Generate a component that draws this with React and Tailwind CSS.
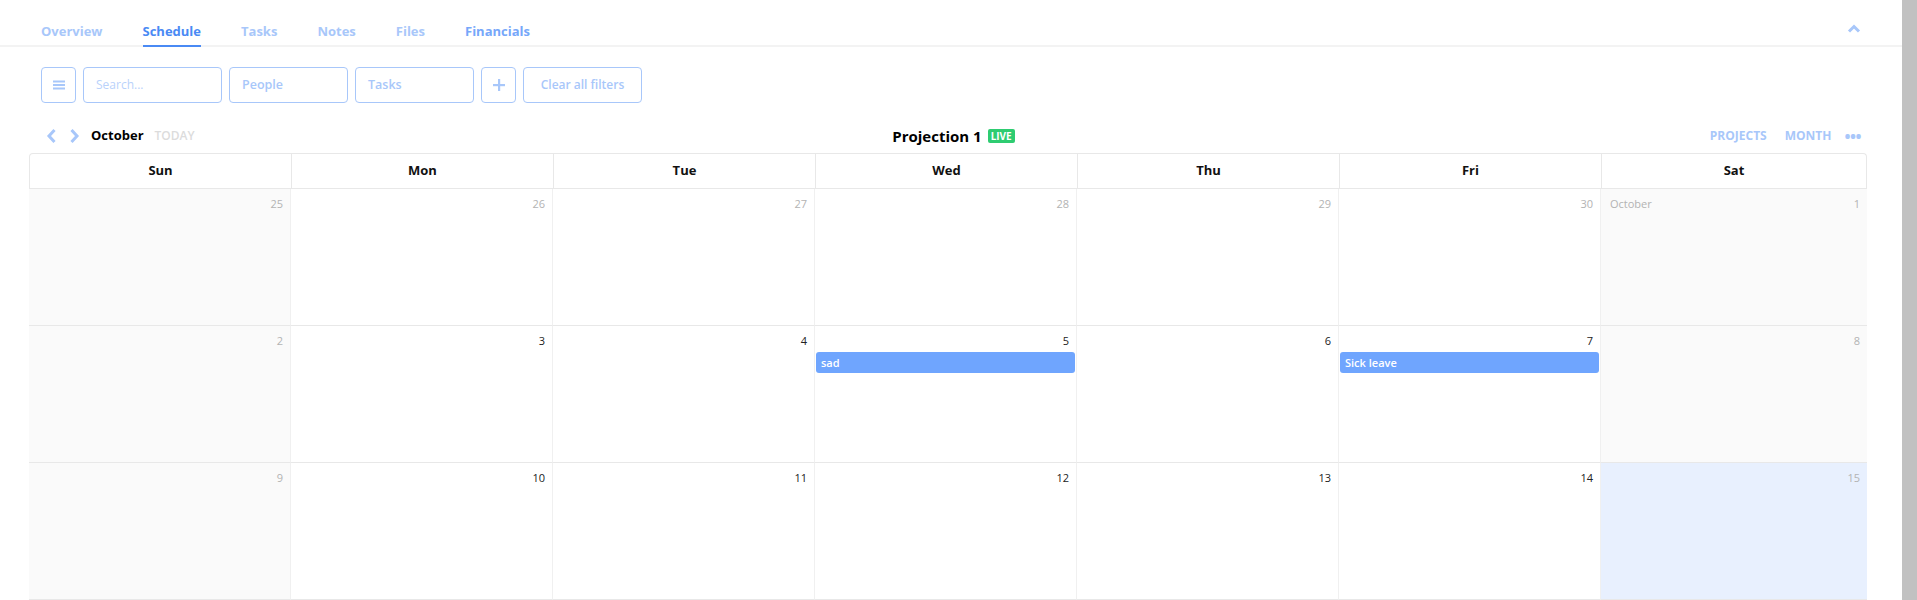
import React from "react";

const tabs = [
  { label: "Overview", state: "idle" },
  { label: "Schedule", state: "active" },
  { label: "Tasks", state: "idle" },
  { label: "Notes", state: "idle" },
  { label: "Files", state: "idle" },
  { label: "Financials", state: "strong" },
];

const days = ["Sun", "Mon", "Tue", "Wed", "Thu", "Fri", "Sat"];

const weeks = [
  [
    { n: 25, muted: true, shade: true },
    { n: 26, muted: true },
    { n: 27, muted: true },
    { n: 28, muted: true },
    { n: 29, muted: true },
    { n: 30, muted: true },
    { n: 1, muted: true, shade: true, month: "October" },
  ],
  [
    { n: 2, muted: true, shade: true },
    { n: 3 },
    { n: 4 },
    { n: 5, event: "sad" },
    { n: 6 },
    { n: 7, event: "Sick leave" },
    { n: 8, muted: true, shade: true },
  ],
  [
    { n: 9, muted: true, shade: true },
    { n: 10 },
    { n: 11 },
    { n: 12 },
    { n: 13 },
    { n: 14 },
    { n: 15, muted: true, today: true },
  ],
];

const ChevronUp = () => (
  <svg width="14" height="9" viewBox="0 0 14 9" fill="none">
    <path d="M2 7.5L7 2.5L12 7.5" stroke="#a8c7fa" strokeWidth="3" />
  </svg>
);

const Arrow = ({ dir }) => (
  <svg width="11" height="16" viewBox="0 0 11 16" fill="none">
    <path
      d={dir === "left" ? "M8.5 2L3 8L8.5 14" : "M2.5 2L8 8L2.5 14"}
      stroke="#a8c7fa"
      strokeWidth="3"
    />
  </svg>
);

function Cell({ day, last }) {
  const bg = day.today ? "bg-[#e8f0fe]" : day.shade ? "bg-[#fafafa]" : "bg-white";
  return (
    <div
      className={`h-[137px] border-b border-[#e8e8e8] ${
        last ? "" : "border-r border-r-[#f0f0f0]"
      } ${bg} flex flex-col`}
    >
      <div className="flex justify-between pl-[9px] pr-[7px] pt-[8px] text-[11px] leading-[14px]">
        <span className="text-[#b3b3b3]">{day.month || ""}</span>
        <span className={day.muted ? "text-[#b3b3b3]" : "text-[#222]"}>{day.n}</span>
      </div>
      {day.event && (
        <div className="mt-[4px] mx-[1px] h-[21px] rounded-[3px] bg-[#6fa5fe] pl-[5px] text-[11px] font-semibold leading-[21px] text-white">
          {day.event}
        </div>
      )}
    </div>
  );
}

export default function App() {
  return (
    <div className="flex h-[600px] w-[1917px] overflow-hidden bg-white font-['Open_Sans',sans-serif]">
      <div className="w-[1902px] shrink-0">
        {/* tabs */}
        <div className="flex items-end justify-between border-b-2 border-[#f3f3f3] pl-[41px] pr-[40px]">
          <div className="flex gap-[40px]">
            {tabs.map((t) => (
              <div
                key={t.label}
                className={`-mb-[2px] border-b-2 pt-[21px] pb-[4px] text-[13px] font-bold leading-5 ${
                  t.state === "active"
                    ? "border-[#4a8af4] text-[#4a8af4]"
                    : t.state === "strong"
                    ? "border-transparent text-[#76a7fa]"
                    : "border-transparent text-[#a8c7fa]"
                }`}
              >
                {t.label}
              </div>
            ))}
          </div>
          <div className="pb-[12px] pr-[1px]">
            <ChevronUp />
          </div>
        </div>

        {/* filters */}
        <div className="mt-5 flex gap-[7px] pl-[41px]">
          <button className="flex h-9 w-[35px] items-center justify-center rounded-[4px] border border-[#a8c7fa]">
            <svg width="12" height="10" viewBox="0 0 12 10">
              <rect x="0" y="0.5" width="12" height="2" fill="#a8c7fa" />
              <rect x="0" y="4" width="12" height="2" fill="#a8c7fa" />
              <rect x="0" y="7.5" width="12" height="2" fill="#a8c7fa" />
            </svg>
          </button>
          <div className="flex h-9 w-[139px] items-center rounded-[4px] border border-[#a8c7fa] px-3 text-[12px] text-[#b9d2fb]">
            Search...
          </div>
          <div className="flex h-9 w-[119px] items-center rounded-[4px] border border-[#a8c7fa] px-3 text-[12.5px] font-semibold text-[#a8c7fa]">
            People
          </div>
          <div className="flex h-9 w-[119px] items-center rounded-[4px] border border-[#a8c7fa] px-3 text-[12.5px] font-semibold text-[#a8c7fa]">
            Tasks
          </div>
          <button className="flex h-9 w-[35px] items-center justify-center rounded-[4px] border border-[#a8c7fa]">
            <svg width="12" height="12" viewBox="0 0 12 12">
              <rect x="5" y="0" width="2.2" height="12" fill="#a8c7fa" />
              <rect x="0" y="5" width="12" height="2.2" fill="#a8c7fa" />
            </svg>
          </button>
          <button className="flex h-9 w-[119px] items-center justify-center rounded-[4px] border border-[#a8c7fa] text-[12px] font-semibold text-[#a8c7fa]">
            Clear all filters
          </button>
        </div>

        {/* calendar toolbar */}
        <div className="mt-[21px] grid h-6 grid-cols-3 items-center pl-[46px] pr-[41px]">
          <div className="flex items-center">
            <Arrow dir="left" />
            <span className="ml-[12px]">
              <Arrow dir="right" />
            </span>
            <span className="ml-[11px] text-[13px] font-bold text-black">October</span>
            <span className="ml-[11px] text-[12px] font-semibold text-[#dcdcdc]">TODAY</span>
          </div>
          <div className="flex items-center justify-center gap-[6px]">
            <span className="text-[15px] font-bold text-black">Projection 1</span>
            <span className="rounded-[2px] bg-[#2ecc71] px-[3px] text-[10px] font-bold leading-[14px] text-white">
              LIVE
            </span>
          </div>
          <div className="flex items-center justify-end text-[12px] font-bold text-[#a8c7fa]">
            <span>PROJECTS</span>
            <span className="ml-[18px]">MONTH</span>
            <span className="ml-[13px] text-[16px] leading-none tracking-[-0.5px]">•••</span>
          </div>
        </div>

        {/* grid */}
        <div className="mt-[5px] ml-[29px] w-[1838px]">
          <div className="grid grid-cols-[repeat(6,262px)_1fr] rounded-t-[4px] border border-b-0 border-[#e8e8e8]">
            {days.map((d, i) => (
              <div
                key={d}
                className={`flex h-[35px] items-center justify-center border-b border-[#e8e8e8] text-[13px] font-bold text-[#111] ${
                  i < 6 ? "border-r" : ""
                }`}
              >
                {d}
              </div>
            ))}
          </div>
          {weeks.map((w, wi) => (
            <div key={wi} className="grid grid-cols-[repeat(6,262px)_1fr]">
              {w.map((day, di) => (
                <Cell key={di} day={day} last={di === 6} />
              ))}
            </div>
          ))}
        </div>
      </div>
      <div className="w-[15px] shrink-0 bg-[#c1c1c1]" />
    </div>
  );
}
